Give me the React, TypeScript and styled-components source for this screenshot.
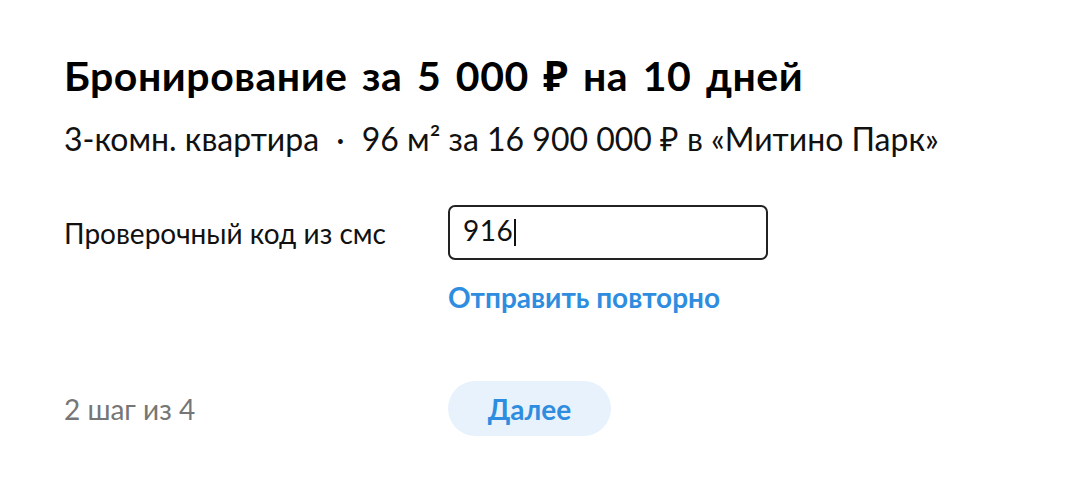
import styled, { createGlobalStyle } from "styled-components";

const GlobalStyle = createGlobalStyle`
  body {
    margin: 0;
    background: #fff;
    font-family: Lato, "Noto Sans", sans-serif;
    color: #111;
  }
`;

export default function App() {
  return (
    <>
      <GlobalStyle />
      <Page>
        <Title>Бронирование за 5 000 ₽ на 10 дней</Title>
        <Subtitle>
          3-комн. квартира <Dot>·</Dot> 96 м² за 16 900 000 ₽ в «Митино Парк»
        </Subtitle>
        <Form>
          <Label>Проверочный код из смс</Label>
          <CodeBox>
            916
            <Caret />
          </CodeBox>
          <span />
          <Resend href="#">Отправить повторно</Resend>
          <Step>2 шаг из 4</Step>
          <NextCell>
            <NextButton>Далее</NextButton>
          </NextCell>
        </Form>
      </Page>
    </>
  );
}

const Page = styled.div`
  padding: 52px 64px 0;
`;

const Title = styled.h1`
  margin: 0;
  font-size: 41px;
  line-height: 48px;
  font-weight: 700;
  letter-spacing: 0.55px;
  word-spacing: 4px;
  color: #000;
`;

const Subtitle = styled.p`
  margin: 19px 0 0;
  font-size: 32px;
  line-height: 40px;
  color: #111;
`;

const Dot = styled.span`
  margin: 0 9px;
`;

const Form = styled.div`
  display: grid;
  grid-template-columns: 384px 320px;
  align-items: center;
  margin-top: 46px;
`;

const Label = styled.div`
  font-size: 28px;
  line-height: 36px;
  color: #111;
`;

const CodeBox = styled.div`
  box-sizing: border-box;
  height: 55px;
  border: 2px solid #222;
  border-radius: 7px;
  padding: 0 12px 6px 13px;
  display: flex;
  align-items: center;
  font-size: 28px;
  letter-spacing: 0.5px;
  color: #111;
`;

const Caret = styled.span`
  display: inline-block;
  width: 2px;
  height: 27px;
  background: #111;
  margin: 6px 0 0 1px;
`;

const Resend = styled.a`
  margin-top: 19px;
  font-size: 28px;
  font-weight: 700;
  line-height: 36px;
  color: #2f8de0;
  text-decoration: none;
`;

const Step = styled.div`
  margin-top: 66px;
  font-size: 28px;
  line-height: 36px;
  color: #767676;
`;

const NextCell = styled.div`
  margin-top: 66px;
`;

const NextButton = styled.button`
  width: 163px;
  height: 55px;
  border: none;
  border-radius: 28px;
  background: #e8f2fc;
  color: #2f8de0;
  font-family: Lato, "Noto Sans", sans-serif;
  font-size: 28px;
  font-weight: 700;
  cursor: pointer;
`;
